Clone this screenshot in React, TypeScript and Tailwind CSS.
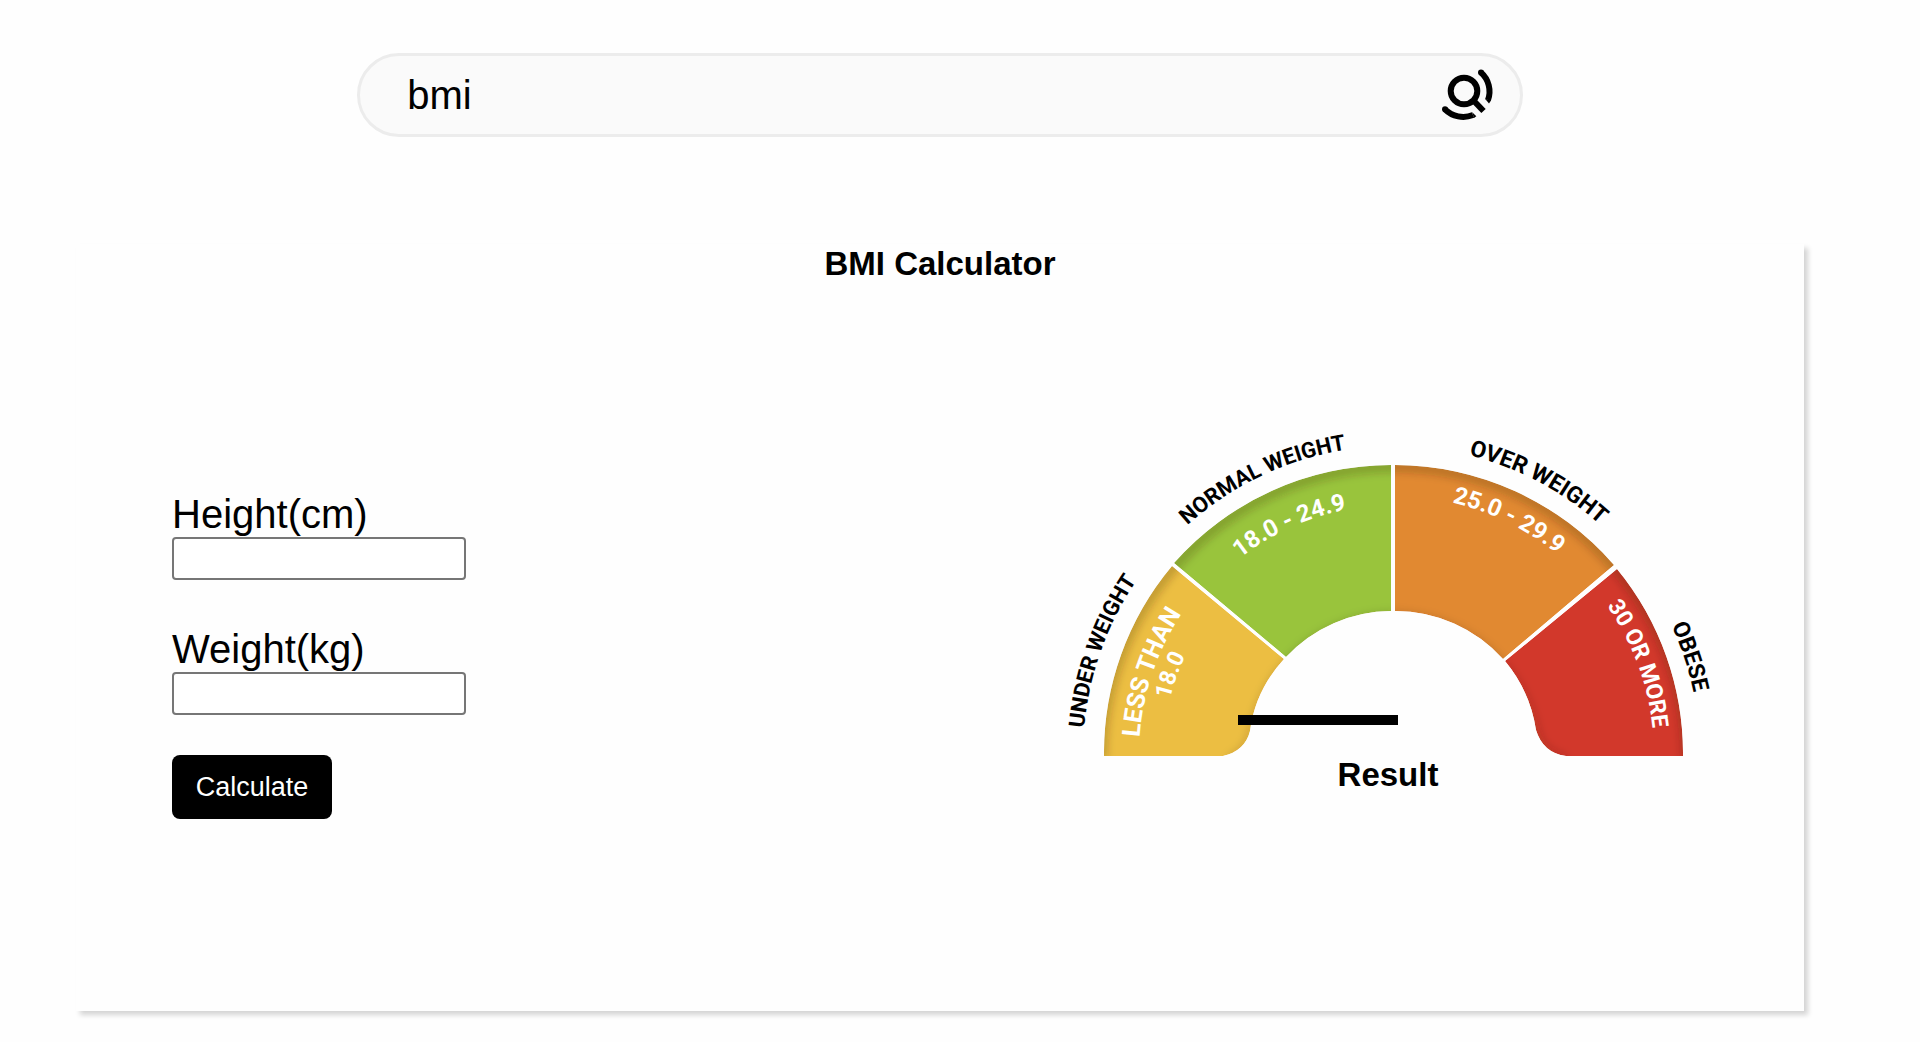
import { useState } from "react";

type ArcLabel = {
  id: string;
  text: string;
  radius: number;
  angle: number;
  size: number;
  color: string;
};

// Origin of the drawing is the centre of the dial; angles are degrees clockwise from the top.
const labels: ArcLabel[] = [
  { id: "under", text: "UNDER WEIGHT", radius: 311, angle: -85, size: 22, color: "#000" },
  { id: "normal", text: "NORMAL WEIGHT", radius: 309, angle: -42, size: 22, color: "#000" },
  { id: "over", text: "OVER WEIGHT", radius: 309, angle: 14, size: 23, color: "#000" },
  { id: "obese", text: "OBESE", radius: 306, angle: 65, size: 23, color: "#000" },
  { id: "less", text: "LESS THAN", radius: 255, angle: -86, size: 25, color: "#fff" },
  { id: "less18", text: "18.0", radius: 231, angle: -76, size: 23, color: "#fff" },
  { id: "range1", text: "18.0 - 24.9", radius: 250, angle: -38, size: 24, color: "#fff" },
  { id: "range2", text: "25.0 - 29.9", radius: 259, angle: 13, size: 24, color: "#fff" },
  { id: "more", text: "30 OR MORE", radius: 260, angle: 55, size: 23, color: "#fff" },
];

const segments = [
  {
    id: "seg-yellow",
    fill: "#ecbe42",
    d: "M-290 1 A291 291 0 0 1 -222 -189 L-110 -96 Q-139 -64 -144 -24 Q-149 -4 -171 1 Z",
  },
  { id: "seg-green", fill: "#99c43c", d: "M-220 -192 A291 291 0 0 1 -3 -290 L-3 -144 A145 145 0 0 0 -108 -98 Z" },
  { id: "seg-orange", fill: "#e18931", d: "M1 -290 A291 291 0 0 1 220 -190 L109 -96 A145 145 0 0 0 1 -144 Z" },
  {
    id: "seg-red",
    fill: "#d2382b",
    d: "M223 -186 A291 291 0 0 1 289 1 L172 1 Q149 -2 142 -25 Q136 -64 111 -94 Z",
  },
];

function arcFrom(radius: number, angle: number) {
  const point = (a: number) => {
    const t = (a * Math.PI) / 180;
    return `${radius * Math.sin(t)} ${-radius * Math.cos(t)}`;
  };
  return `M${point(angle)} A${radius} ${radius} 0 0 1 ${point(angle + 60)}`;
}

function Gauge() {
  return (
    <svg viewBox="-334 -330 658 332" className="block w-full" role="img" aria-label="BMI gauge">
      <defs>
        <filter id="soft" x="-20%" y="-20%" width="140%" height="140%">
          <feGaussianBlur stdDeviation="5" />
        </filter>
        {segments.map((s) => (
          <clipPath key={s.id} id={s.id}>
            <path d={s.d} />
          </clipPath>
        ))}
        {labels.map((l) => (
          <path key={l.id} id={l.id} d={arcFrom(l.radius, l.angle)} />
        ))}
      </defs>
      {segments.map((s) => (
        <g key={s.id} clipPath={`url(#${s.id})`}>
          <path d={s.d} fill={s.fill} />
          <g filter="url(#soft)" fill="none" stroke="#3a2a00">
            <path d="M-292 4 A292 292 0 0 1 292 4" strokeWidth="6" opacity="0.4" />
            <path
              d="M-165 4 Q-147 -2 -142 -24 A145 145 0 0 1 142 -24 Q147 -2 172 4"
              strokeWidth="4"
              opacity="0.3"
            />
          </g>
        </g>
      ))}
      {labels.map((l) => (
        <text key={l.id} fill={l.color} fontSize={l.size} fontWeight="700" fontFamily="Roboto, sans-serif">
          <textPath href={`#${l.id}`}>{l.text}</textPath>
        </text>
      ))}
    </svg>
  );
}

function SearchIcon() {
  return (
    <svg viewBox="-26 -26 60 60" className="size-[60px]" fill="none" stroke="#000" strokeWidth="6" aria-hidden="true">
      <circle r="13.3" />
      <path d="M9 9 L19.5 20" />
      <path d="M17 -18.5 A25.3 25.3 0 0 1 24 9" />
      <path d="M-19 18.3 A25.8 25.8 0 0 0 9 24" />
      <g fill="#000" stroke="none">
        <circle cx="17" cy="-18.5" r="3" />
        <circle cx="-19" cy="18.3" r="3" />
        <path d="M21 7.8 L27 9.6 L25 12.5 Z" />
        <path d="M8 21 L12.3 25.3 L10 27 Z" />
      </g>
    </svg>
  );
}

function Field({ id, label }: { id: string; label: string }) {
  const [value, setValue] = useState("");
  return (
    <div className="flex flex-col">
      <label htmlFor={id} className="text-[40px] leading-[46px]">
        {label}
      </label>
      <input
        id={id}
        value={value}
        onChange={(e) => setValue(e.target.value)}
        className="h-[43px] w-[294px] rounded border-2 border-[#767676] bg-white px-1 text-2xl"
      />
    </div>
  );
}

export default function App() {
  const [query, setQuery] = useState("bmi");
  return (
    <div className="min-h-screen bg-[#fefefe] pt-[53px] pr-10 pb-[31px] font-['Liberation_Sans',Arial,sans-serif] text-black">
      <form
        onSubmit={(e) => e.preventDefault()}
        className="mx-auto flex h-[84px] w-[62%] items-center rounded-[42px] border-3 border-[#ececec] bg-[#fafafa] pr-[22px] pl-[47px]"
      >
        <input
          aria-label="Search"
          value={query}
          onChange={(e) => setQuery(e.target.value)}
          className="min-w-0 flex-1 bg-transparent text-[40px] leading-[46px] outline-none"
        />
        <button type="submit" aria-label="Search">
          <SearchIcon />
        </button>
      </form>

      <main className="mx-[76px] mt-[107px] bg-[#fefefe] pb-[192px] shadow-[4px_4px_5px_#d4d4d4]">
        <h1 className="text-center text-[33px] leading-10 font-bold">BMI Calculator</h1>
        <div className="flex items-start justify-between pr-[86px] pl-24">
          <form onSubmit={(e) => e.preventDefault()} className="mt-[207px] flex flex-col items-start">
            <Field id="height" label="Height(cm)" />
            <div className="mt-[46px]">
              <Field id="weight" label="Weight(kg)" />
            </div>
            <button type="submit" className="mt-10 h-16 w-40 rounded-lg bg-black text-[27px] leading-8 text-white">
              Calculate
            </button>
          </form>
          <section className="relative mt-[141px] w-[658px]">
            <Gauge />
            <div className="absolute top-[290px] left-[178px] h-[10px] w-40 bg-black" />
            <h2 className="pr-[2px] text-center text-[33px] leading-9 font-bold">Result</h2>
          </section>
        </div>
      </main>
    </div>
  );
}
